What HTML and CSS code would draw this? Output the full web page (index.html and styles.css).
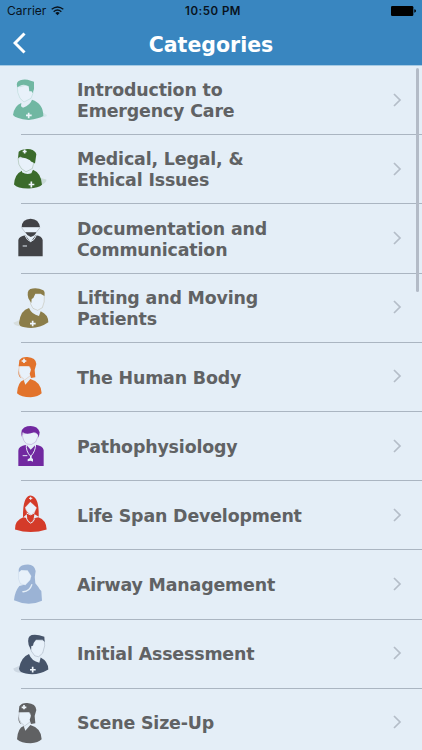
FILE: index.html
```html
<!DOCTYPE html>
<html lang="en">
<head>
<meta charset="utf-8">
<title>Categories</title>
<link rel="stylesheet" href="styles.css">
</head>
<body>
<header class="header">
  <div class="status">
    <div class="carrier"><span class="carrier-name">Carrier</span>
      <svg class="wifi" viewBox="0 0 39 30"><g fill="none" stroke="#08131d" stroke-width="4"><path d="M2 10Q19.500-4 37 10"/><path d="M8 17Q19.500 7 31 17"/></g><path fill="#08131d" d="M13 21Q19.500 15 26 21L19.500 28Z"/></svg>
    </div>
    <span class="time">10:50 PM</span>
    <svg class="battery" viewBox="0 0 75 30"><rect width="67" height="30" rx="4"/><path d="M70 10q5 1 5 5t-5 5z"/></svg>
  </div>
  <div class="bar">
    <svg class="back" viewBox="0 0 13 22"><path d="M11.500 1.500 2 11l9.500 9.500"/></svg>
    <h1 class="title">Categories</h1>
  </div>
</header>
<main class="list">
  <div class="row"><svg class="avatar mint" viewBox="0 0 180 207.6"><path class="shade" d="M110 130l30 16q5 8-25 8z"/><path class="skin" d="M52 62Q51 80 60 97L72 108 93 97Q102 81 101 63L87 60Q76 55 61 62z"/><path d="M52 64Q46 48 61 43Q75 38 92 44L102 47V69L97 82 95 76H88L86 61Q74 53 60 59z"/><path d="M64 111Q43 119 39 147Q47 158 86 162Q118 158 130 150Q130 112 96 101Q91 117 69 125L63 121z"/><path class="cross" d="M86 140v17M78 148h17"/></svg><span class="label">Introduction to<br>Emergency Care</span><svg class="chevron" viewBox="0 0 8 14"><path d="m1 1 6 6-6 6"/></svg></div>
  <div class="row"><svg class="avatar green" viewBox="0 -2.5 180 207.6"><path class="shade" d="M115 125l24 6q3 11-25 20z"/><path class="skin" d="M54 66Q54 88 64 98L78 108 97 98 102 78 86 65z"/><path d="M54 67L56 48Q67 38 91 40Q106 44 109 55L105 83 98 79Q92 77 90 73Q77 66 66 65Q61 59 54 67z"/><path d="M66 105Q44 115 42 146Q53 159 88 158Q116 157 126 147Q124 112 99 102L94 112Q80 118 66 109z"/><path class="cross" d="M94 137v18M86 146h17M74 41v12M68 47h12"/></svg><span class="label">Medical, Legal, &amp;<br>Ethical Issues</span><svg class="chevron" viewBox="0 0 8 14"><path d="m1 1 6 6-6 6"/></svg></div>
  <div class="row"><svg class="avatar charcoal" viewBox="0 205 180 207.6"><path d="M65 275Q65 250 92 249Q117 250 120 275z"/><path class="skin" d="M65 276L76 291Q91 300 107 292L120 276"/><path d="M76 290H109Q104 302 92 304Q81 301 76 290z"/><path d="M55 362V313Q57 302 76 299L92 319 107 299Q126 301 128 313V362z"/><path class="line" d="M75 299Q80 314 92 318Q104 314 109 299M68 331h13"/></svg><span class="label">Documentation and<br>Communication</span><svg class="chevron" viewBox="0 0 8 14"><path d="m1 1 6 6-6 6"/></svg></div>
  <div class="row"><svg class="avatar olive" viewBox="0 -7 180 207.6"><path class="shade" d="M65 129L40 139q2 9 24 11z"/><path class="skin" d="M89 61L92 83 99 96 113 102 127 94Q135 78 133 56L122 52H106z"/><path d="M85 66Q79 44 91 38Q111 32 130 42Q136 47 133 59L122 52H106L100 65 95 68 94 80z"/><path d="M87 95Q62 101 57 139Q57 151 74 153Q112 161 145 138Q145 115 122 105L117 119Q95 114 87 95z"/><path class="cross" d="M98 133v17M90 142h17"/></svg><span class="label">Lifting and Moving<br>Patients</span><svg class="chevron" viewBox="0 0 8 14"><path d="m1 1 6 6-6 6"/></svg></div>
  <div class="row"><svg class="avatar orange" viewBox="0 200 180 207.6"><path class="skin" d="M58 267Q53 286 61 299L74 311 91 298 95 280 86 270z"/><path d="M56 270L58 252Q65 241 82 242Q108 244 109 263L104 281 106 303 93 305 89 292Q97 277 87 269z"/><path d="M56 275Q54 294 64 306Q52 300 56 275z"/><path d="M71 311Q53 317 51 351Q63 363 92 363Q115 362 125 351Q124 317 91 308L76 325z"/><path class="cross" d="M72 247v13M65 254h14"/></svg><span class="label">The Human Body</span><svg class="chevron" viewBox="0 0 8 14"><path d="m1 1 6 6-6 6"/></svg></div>
  <div class="row"><svg class="avatar purple" viewBox="0 -12 180 207.6"><path class="skin" d="M67 54Q68 76 81 84Q94 90 107 78L117 54 101 49z"/><path d="M65 63Q60 35 82 31Q112 26 119 49L116 65Q114 50 102 49Q80 57 68 49z"/><path d="M55 150V104Q54 91 79 86L92 101 107 86Q128 89 131 102V150z"/><path class="line" d="M79 83Q77 107 92 121Q107 107 107 83M68 119h14"/><path class="fill-light" d="M90 119h5v7l4 3v8l-7-3-9 2v-6l7-4z"/></svg><span class="label">Pathophysiology</span><svg class="chevron" viewBox="0 0 8 14"><path d="m1 1 6 6-6 6"/></svg></div>
  <div class="row"><svg class="avatar red" viewBox="0 195.500 180 207.6"><path d="M69 305Q68 240 92 239Q118 242 116 303L104 295H80z"/><path class="skin" d="M75 275L91 258 110 275Q108 288 97 295L92 297Q78 290 75 275z"/><path d="M80 292L92 297 104 291 101 308 92 323 82 309z"/><path d="M70 304Q43 314 45 341Q92 356 140 341Q139 312 115 304L102 307 92 321 82 307z"/><path class="line" d="M80 292L92 297 104 291M79 307q5 12 13 15q9-3 12-14"/><path class="cross small" d="M92 243v9M87 247.500h10"/></svg><span class="label">Life Span Development</span><svg class="chevron" viewBox="0 0 8 14"><path d="m1 1 6 6-6 6"/></svg></div>
  <div class="row"><svg class="avatar sky" viewBox="0 -17 180 207.6"><path d="M56 47Q54 30 75 27Q103 22 107 46Q102 65 106 83L115 94 119 101 124 106 126 135Q86 154 42 134Q44 108 58 91L73 87 62 72z"/><path class="skin" d="M56 50Q53 72 61 84L76 89 91 73 94 61 83 44 64 43z"/><path class="line thick" d="M67 108Q88 110 96 86"/></svg><span class="label">Airway Management</span><svg class="chevron" viewBox="0 0 8 14"><path d="m1 1 6 6-6 6"/></svg></div>
  <div class="row"><svg class="avatar navy" viewBox="0 190.700 180 207.6"><path class="shade" d="M65 325L40 336q2 13 24 13z"/><path class="skin" d="M90 258L94 284 104 298 116 301 128 290 134 268 133 252 108 250z"/><path d="M86 266Q80 240 95 236Q109 232 133 241L134 257 128 250H108L101 260 99 268 94 269 93 281z"/><path d="M87 293Q62 303 57 337Q59 349 77 351Q111 359 145 339Q145 315 122 303L118 319Q95 315 87 293z"/><path class="cross" d="M98 331v17M90 340h17"/></svg><span class="label">Initial Assessment</span><svg class="chevron" viewBox="0 0 8 14"><path d="m1 1 6 6-6 6"/></svg></div>
  <div class="row"><svg class="avatar gray" viewBox="0 398 180 207.6"><path class="skin" d="M58 467Q53 484 61 497L74 509 91 496 95 478 86 468z"/><path d="M56 468L58 450Q65 439 82 440Q108 442 109 461L104 479 106 501 93 503 89 490Q97 475 87 467z"/><path d="M56 473Q54 492 64 504Q52 498 56 473z"/><path d="M71 509Q53 515 51 549Q63 561 92 561Q115 560 125 549Q124 515 91 506L76 523z"/><path class="cross" d="M72 446v13M65 453h14"/></svg><span class="label">Scene Size-Up</span><svg class="chevron" viewBox="0 0 8 14"><path d="m1 1 6 6-6 6"/></svg></div>
  <div class="scrollbar"></div>
</main>
</body>
</html>
```
FILE: styles.css
```css
* { box-sizing: border-box; }
body {
  margin: 0;
  width: 422px;
  height: 750px;
  overflow: hidden;
  background: #e4eef7;
  font-family: Verdana, "DejaVu Sans", sans-serif;
}
.header {
  height: 66px;
  background: #3986c0;
  border-bottom: 1px solid #a5cae4;
}
.status {
  display: grid;
  grid-template-columns: 1fr auto 1fr;
  align-items: center;
  height: 22px;
  padding: 0 6px 0 7px;
  color: #08131d;
  font: 12px/22px Inter, sans-serif;
}
.carrier { display: flex; align-items: center; gap: 5px; }
.carrier-name { letter-spacing: 0; }
.wifi { width: 13px; height: 10px; }
.time { padding-left: 3px; font-weight: 600; font-size: 11.5px; letter-spacing: 0.5px; }
.battery { width: 25px; height: 10px; justify-self: end; fill: #000; }
.bar {
  display: grid;
  grid-template-columns: 40px 1fr 40px;
  align-items: center;
  height: 43px;
}
.back {
  width: 13px;
  height: 22px;
  margin: -3px 0 0 13px;
  fill: none;
  stroke: #fff;
  stroke-width: 3;
}
.title {
  margin: 0;
  padding-top: 2px;
  color: #fff;
  font-size: 20.5px;
  line-height: 43px;
  text-align: center;
}
.list { position: relative; }
.row {
  display: grid;
  grid-template-columns: 60px 1fr 8px;
  align-items: center;
  height: 69.2px;
  padding-right: 21px;
  background: linear-gradient(#aab5c1, #aab5c1) 21px 100% / 100% 1px no-repeat;
}
.label {
  padding: 1.4px 0 0 17px;
  color: #606264;
  font-size: 17.4px;
  font-weight: 700;
  line-height: 21px;
  letter-spacing: -0.15px;
  white-space: nowrap;
}
.chevron {
  width: 8px;
  height: 14px;
  margin-bottom: 2px;
  overflow: visible;
  fill: none;
  stroke: #b4bdc8;
  stroke-width: 1.7;
}
.avatar { display: block; width: 60px; height: 69.2px; fill: currentColor; }
.skin { fill: #e8f1fa; stroke: currentColor; stroke-width: 0.7; }
.shade { fill: currentColor; opacity: 0.14; }
.cross { fill: none; stroke: #eef5fb; stroke-width: 5; }
.small { stroke-width: 3; }
.line { fill: none; stroke: #e4eef7; stroke-width: 3; }
.thick { stroke-width: 4; }
.fill-light { fill: #e4eef7; }
.mint { color: #70b7a2; }
.green { color: #3b6b2b; }
.charcoal { color: #424347; }
.olive { color: #8b7d49; }
.orange { color: #e2732c; }
.purple { color: #7128a0; }
.red { color: #d43b29; }
.sky { color: #9bb3d5; }
.navy { color: #46546a; }
.gray { color: #606163; }
.scrollbar {
  position: absolute;
  top: 2px;
  right: 3px;
  width: 3px;
  height: 224px;
  border-radius: 2px;
  background: #b3bbc7;
}
```
